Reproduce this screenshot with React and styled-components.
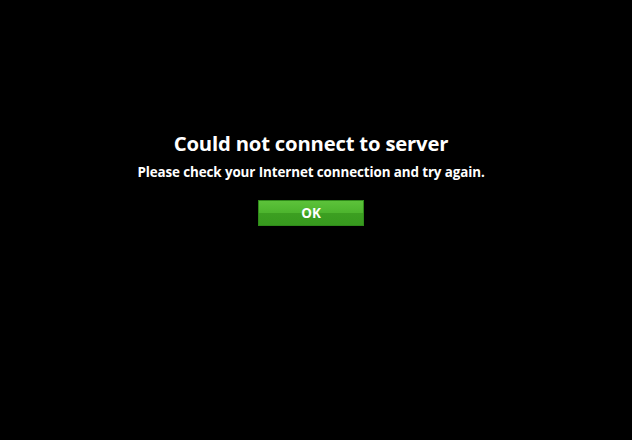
import React from "react";
import styled, { createGlobalStyle } from "styled-components";

const Global = createGlobalStyle`
  html, body { margin: 0; padding: 0; background: #000; }
  body { font-family: "Open Sans", "Noto Sans", sans-serif; }
`;

const Screen = styled.div`
  width: 632px;
  height: 440px;
  background: #000;
  display: flex;
  flex-direction: column;
  align-items: center;
  padding: 130px 10px 0 0;
  box-sizing: border-box;
  color: #fff;
`;

const Title = styled.h1`
  margin: 0;
  font-size: 20.3px;
  font-weight: 700;
  line-height: 26px;
  letter-spacing: -0.2px;
`;

const Message = styled.p`
  margin: 7px 0 0;
  font-size: 13.4px;
  font-weight: 700;
  line-height: 18px;
  letter-spacing: -0.1px;
`;

const OkButton = styled.button`
  margin-top: 19px;
  width: 106px;
  height: 26px;
  border: 1px solid #2f8a1a;
  background: linear-gradient(to bottom, #5cc23a 0%, #4db52e 48%, #3c9f21 52%, #379a1e 100%);
  color: #fff;
  font-family: inherit;
  font-size: 13.4px;
  font-weight: 700;
  padding: 0;
  cursor: pointer;
`;

export default function App() {
  return (
    <>
      <Global />
      <Screen>
        <Title>Could not connect to server</Title>
        <Message>Please check your Internet connection and try again.</Message>
        <OkButton>OK</OkButton>
      </Screen>
    </>
  );
}
